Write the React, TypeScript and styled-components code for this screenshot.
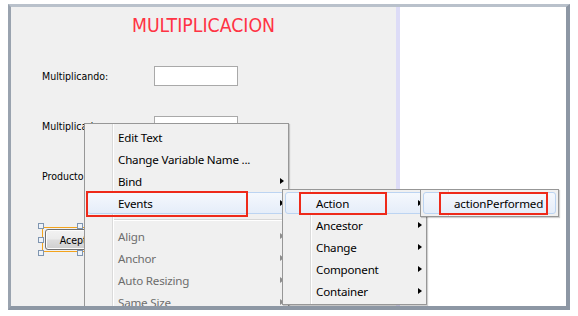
import React from "react";
import styled, { createGlobalStyle, css } from "styled-components";

const GlobalStyle = createGlobalStyle`
  html, body {
    margin: 0;
    padding: 0;
    background: #ffffff;
  }
  body {
    font-family: "Noto Sans", "DejaVu Sans", sans-serif;
  }
`;

const Frame = styled.div`
  box-sizing: border-box;
  margin: 4px 0 0 8px;
  width: 562px;
  height: 306px;
  border-style: solid;
  border-width: 3px 4px 4px 3px;
  border-color: #b9c1cb #8d97a4 #8d97a4 #9aa3af;
`;

const Content = styled.div`
  position: relative;
  display: flex;
  height: 100%;
  overflow: hidden;
`;

const FormPanel = styled.div`
  box-sizing: border-box;
  width: 385px;
  background: #f0f0f0;
  display: flex;
  flex-direction: column;
  padding-top: 8px;
  font-family: "DejaVu Sans Condensed", "DejaVu Sans", sans-serif;
`;

const Title = styled.div`
  text-align: center;
  font-size: 19.3px;
  line-height: 22px;
  color: #ff3344;
`;

const FieldGrid = styled.div`
  display: grid;
  grid-template-columns: 112px 84px;
  grid-auto-rows: 20px;
  row-gap: 30px;
  margin: 29px 0 0 31px;
`;

const FieldLabel = styled.div`
  font-size: 10.5px;
  color: #000;
  display: flex;
  align-items: center;
  white-space: nowrap;
`;

const TextBox = styled.div`
  box-sizing: border-box;
  border: 1px solid #a9a9a9;
  background: #fff;
`;

const Selection = styled.div`
  position: relative;
  align-self: flex-start;
  margin: 41px 0 0 31px;
  border: 1px solid #f3a31c;
  padding: 1px 2px;
`;

const Handle = styled.span<{ $x: "l" | "c" | "r"; $y: "t" | "m" | "b" }>`
  position: absolute;
  box-sizing: border-box;
  width: 6px;
  height: 6px;
  border: 1px solid #7f95b0;
  background: #eef3f9;
  ${(p) =>
    p.$x === "l" ? css`left: -5px;` : p.$x === "r" ? css`right: -5px;` : css`left: calc(50% - 3px);`}
  ${(p) =>
    p.$y === "t" ? css`top: -5px;` : p.$y === "b" ? css`bottom: -5px;` : css`top: calc(50% - 3px);`}
`;

const PushButton = styled.div`
  box-sizing: border-box;
  width: 69px;
  height: 21px;
  padding-right: 3px;
  border: 1px solid #707070;
  border-radius: 3px;
  background: linear-gradient(to bottom, #f2f2f2 0%, #ebebeb 48%, #dddddd 52%, #cfcfcf 100%);
  box-shadow: inset 0 0 0 1px #fcfcfc;
  display: flex;
  align-items: center;
  justify-content: center;
  font-size: 10.5px;
  color: #000;
`;

const Strip = styled.div`
  width: 4px;
  background: #dddcf7;
`;

const Canvas = styled.div`
  flex: 1;
  background: #ffffff;
`;

const Menu = styled.div<{ $left: number; $top: number; $width: number }>`
  position: absolute;
  left: ${(p) => p.$left}px;
  top: ${(p) => p.$top}px;
  width: ${(p) => p.$width}px;
  box-sizing: border-box;
  border: 1px solid #979797;
  background: #f0f0f0;
  padding: 2px;
  box-shadow: 1px 1px 1px rgba(0, 0, 0, 0.18);
  font-family: "Noto Sans", "DejaVu Sans", sans-serif;
  font-size: 11.6px;
  letter-spacing: -0.2px;

  &::before {
    content: "";
    position: absolute;
    top: 0;
    bottom: 0;
    left: 27px;
    width: 0;
    border-left: 1px solid #dadada;
    border-right: 1px solid #ffffff;
  }
`;

const Item = styled.div<{ $active?: boolean; $disabled?: boolean }>`
  position: relative;
  box-sizing: border-box;
  height: 22px;
  display: flex;
  align-items: center;
  padding: 0 1px 0 30px;
  border: 1px solid transparent;
  border-radius: 3px;
  color: ${(p) => (p.$disabled ? "#6d6d6d" : "#000")};
  white-space: nowrap;
  ${(p) =>
    p.$active &&
    css`
      border-color: #bcd4f2;
      background: linear-gradient(to bottom, #f5f8fd, #e5edf9);
    `}
`;

const ItemText = styled.span`
  flex: 1;
`;

const Arrow = styled.span<{ $disabled?: boolean }>`
  width: 0;
  height: 0;
  border-top: 3.5px solid transparent;
  border-bottom: 3.5px solid transparent;
  border-left: 4px solid ${(p) => (p.$disabled ? "#8d8d8d" : "#000")};
`;

const Separator = styled.div`
  position: relative;
  height: 0;
  margin: 5px 0 4px 27px;
  border-top: 1px solid #d7d7d7;
  border-bottom: 1px solid #ffffff;
`;

const Mark = styled.div<{ $left: number; $top: number; $w: number; $h: number }>`
  position: absolute;
  box-sizing: border-box;
  left: ${(p) => p.$left}px;
  top: ${(p) => p.$top}px;
  width: ${(p) => p.$w}px;
  height: ${(p) => p.$h}px;
  border: 2px solid #ee2a1a;
  pointer-events: none;
`;

type Entry =
  | { sep: true }
  | { label: string; sub?: boolean; active?: boolean; disabled?: boolean };

const mainMenu: Entry[] = [
  { label: "Edit Text" },
  { label: "Change Variable Name ..." },
  { label: "Bind", sub: true },
  { label: "Events", sub: true, active: true },
  { sep: true },
  { label: "Align", sub: true, disabled: true },
  { label: "Anchor", sub: true, disabled: true },
  { label: "Auto Resizing", sub: true, disabled: true },
  { label: "Same Size", sub: true, disabled: true },
];

const eventsMenu: Entry[] = [
  { label: "Action", sub: true, active: true },
  { label: "Ancestor", sub: true },
  { label: "Change", sub: true },
  { label: "Component", sub: true },
  { label: "Container", sub: true },
];

const actionMenu: Entry[] = [{ label: "actionPerformed", active: true }];

function MenuList({ entries }: { entries: Entry[] }) {
  return (
    <>
      {entries.map((e, i) =>
        "sep" in e ? (
          <Separator key={i} />
        ) : (
          <Item key={i} $active={e.active} $disabled={e.disabled}>
            <ItemText>{e.label}</ItemText>
            {e.sub && <Arrow $disabled={e.disabled} />}
          </Item>
        )
      )}
    </>
  );
}

export default function App() {
  return (
    <>
      <GlobalStyle />
      <Frame>
        <Content>
          <FormPanel>
            <Title>MULTIPLICACION</Title>
            <FieldGrid>
              <FieldLabel>Multiplicando:</FieldLabel>
              <TextBox />
              <FieldLabel>Multiplicador:</FieldLabel>
              <TextBox />
              <FieldLabel>Producto:</FieldLabel>
              <TextBox />
            </FieldGrid>
            <Selection>
              <PushButton>Aceptar</PushButton>
              <Handle $x="l" $y="t" />
              <Handle $x="c" $y="t" />
              <Handle $x="r" $y="t" />
              <Handle $x="l" $y="m" />
              <Handle $x="r" $y="m" />
              <Handle $x="l" $y="b" />
              <Handle $x="c" $y="b" />
              <Handle $x="r" $y="b" />
            </Selection>
          </FormPanel>
          <Strip />
          <Canvas />

          <Menu $left={73} $top={116} $width={205}>
            <MenuList entries={mainMenu} />
          </Menu>
          <Menu $left={271} $top={182} $width={145}>
            <MenuList entries={eventsMenu} />
          </Menu>
          <Menu $left={409} $top={182} $width={139}>
            <MenuList entries={actionMenu} />
          </Menu>

          <Mark $left={75} $top={184} $w={162} $h={26} />
          <Mark $left={288} $top={185} $w={88} $h={23} />
          <Mark $left={428} $top={185} $w={109} $h={23} />
        </Content>
      </Frame>
    </>
  );
}
